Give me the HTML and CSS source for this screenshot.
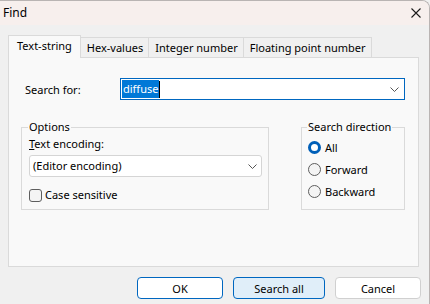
FILE: index.html
```html
<!DOCTYPE html>
<html>
<head>
<meta charset="utf-8">
<link rel="stylesheet" href="styles.css">
</head>
<body>
<div class="window">
  <div class="titlebar">
    <span class="title">Find</span>
    <svg class="close" width="10" height="10" viewBox="0 0 10 10"><path d="M0.5 0.5L9.5 9.5M9.5 0.5L0.5 9.5" stroke="#1a1a1a" stroke-width="1.1" fill="none"/></svg>
  </div>
  <div class="content">
    <div class="tabs">
      <div class="tab active">Text-string</div>
      <div class="tab">Hex-values</div>
      <div class="tab">Integer number</div>
      <div class="tab">Floating point number</div>
    </div>
    <div class="panel">
      <div class="search-row">
        <span class="search-label">Search for:</span>
        <div class="combo focused">
          <span class="value"><span class="sel">diffuse</span><span class="caret"></span></span>
          <svg class="chev" width="9" height="5" viewBox="0 0 9 5"><path d="M0.5 0.5L4.5 4.5L8.5 0.5" stroke="#555" stroke-width="1" fill="none"/></svg>
        </div>
      </div>
      <div class="groups">
        <fieldset class="group options">
          <legend>Options</legend>
          <div class="field-label"><u>T</u>ext encoding:</div>
          <div class="combo plain">
            <span class="value">(Editor encoding)</span>
            <svg class="chev" width="9" height="5" viewBox="0 0 9 5"><path d="M0.5 0.5L4.5 4.5L8.5 0.5" stroke="#555" stroke-width="1" fill="none"/></svg>
          </div>
          <div class="check-row"><span class="checkbox"></span><span>Case sensitive</span></div>
        </fieldset>
        <fieldset class="group direction">
          <legend>Search direction</legend>
          <div class="radio-row"><span class="radio checked"></span><span>All</span></div>
          <div class="radio-row"><span class="radio"></span><span>Forward</span></div>
          <div class="radio-row"><span class="radio"></span><span>Backward</span></div>
        </fieldset>
      </div>
    </div>
  </div>
  <div class="buttons">
    <button class="btn primary">OK</button>
    <button class="btn focus">Search all</button>
    <button class="btn">Cancel</button>
  </div>
</div>
</body>
</html>
```
FILE: styles.css
```css
* { box-sizing: border-box; }
html, body { margin: 0; padding: 0; }
body {
  width: 430px;
  height: 304px;
  overflow: hidden;
  background: #f0f0f0;
  font-family: "Noto Sans", "Open Sans", sans-serif;
  font-size: 11px;
  color: #000;
}
.window {
  width: 430px;
  height: 304px;
  background: #f0f0f0;
  border-top: 1px solid #b9b4b3;
  border-right: 1px solid #b9b4b3;
  border-top-right-radius: 8px;
  overflow: hidden;
  display: flex;
  flex-direction: column;
}
.titlebar {
  height: 24px;
  flex: none;
  background: #f7efed;
  display: flex;
  align-items: center;
  justify-content: space-between;
  padding: 0 8px 0 3px;
}
.title { font-size: 12px; line-height: 14px; }
.close { display: block; }
.content {
  padding: 10px 10px 0 8px;
}
.tabs {
  display: flex;
  align-items: flex-end;
  position: relative;
  z-index: 1;
  margin-bottom: -1px;
}
.tab {
  height: 20px;
  margin-bottom: 1px;
  border: 1px solid #dadada;
  border-bottom: none;
  border-left: none;
  background: #f0f0f0;
  padding: 0 5px 0 6px;
  display: flex;
  align-items: center;
  line-height: 14px;
  white-space: nowrap;
}
.tab.active {
  height: 23px;
  margin-bottom: 0;
  border-left: 1px solid #dadada;
  background: #f9f9f9;
  padding: 0 8px 2px 8px;
}
.panel {
  height: 210px;
  background: #f9f9f9;
  border: 1px solid #dadada;
}
.search-row {
  display: flex;
  align-items: center;
  padding: 20px 13px 0 16px;
}
.search-label { width: 95px; }
.combo {
  flex: 1;
  height: 22px;
  background: #fff;
  display: flex;
  align-items: center;
  justify-content: space-between;
  padding: 0 5px 0 1px;
}
.combo.focused {
  border: 1px solid #0067c0;
}
.combo .value { display: flex; align-items: center; line-height: 14px; }
.sel {
  background: #0078d7;
  color: #fff;
  padding: 2px 1px 2px 1px;
  line-height: 14px;
}
.caret {
  width: 1px;
  height: 17px;
  background: #000;
}
.chev { display: block; }
.groups {
  display: grid;
  grid-template-columns: 248px 104px;
  column-gap: 32px;
  padding: 20px 0 0 12px;
}
.group {
  margin: 0;
  border: 1px solid #dadada;
  min-width: 0;
}
legend {
  padding: 0 1px;
  line-height: 14px;
  margin-left: -1px;
}
.options {
  padding: 3px 7px 7px 7px;
}
.field-label { line-height: 14px; }
.combo.plain {
  flex: none;
  margin-top: 4px;
  border: 1px solid #d5d5d5;
  border-radius: 3px;
  padding: 0 4px 0 3px;
  width: 233px;
}
.check-row {
  display: flex;
  align-items: center;
  gap: 3px;
  margin-top: 11px;
  line-height: 14px;
}
.checkbox {
  width: 13px;
  height: 13px;
  border: 1px solid #5e5e5e;
  border-radius: 3px;
  background: #f4f4f4;
}
.direction {
  padding: 3px 6px 4px 6px;
}
.radio-row {
  display: flex;
  align-items: center;
  gap: 4px;
  height: 21px;
  line-height: 14px;
}
.radio-row + .radio-row { margin-top: 1px; }
.radio {
  width: 13px;
  height: 13px;
  border: 1px solid #5e5e5e;
  border-radius: 50%;
  background: #f4f4f4;
}
.radio.checked {
  border: 3.5px solid #005fb8;
  background: #fff;
}
.buttons {
  display: flex;
  justify-content: flex-end;
  gap: 10px;
  padding: 10px 8px 0 0;
}
.btn {
  width: 86px;
  height: 22px;
  font-family: inherit;
  font-size: 11px;
  color: #000;
  background: #fff;
  border: 1px solid #d0d0d0;
  border-radius: 4px;
  padding: 0;
}
.btn.primary { border-color: #0067c0; }
.btn.focus {
  width: 92px;
  background: #e0eef9;
  border-color: #0067c0;
}
```
